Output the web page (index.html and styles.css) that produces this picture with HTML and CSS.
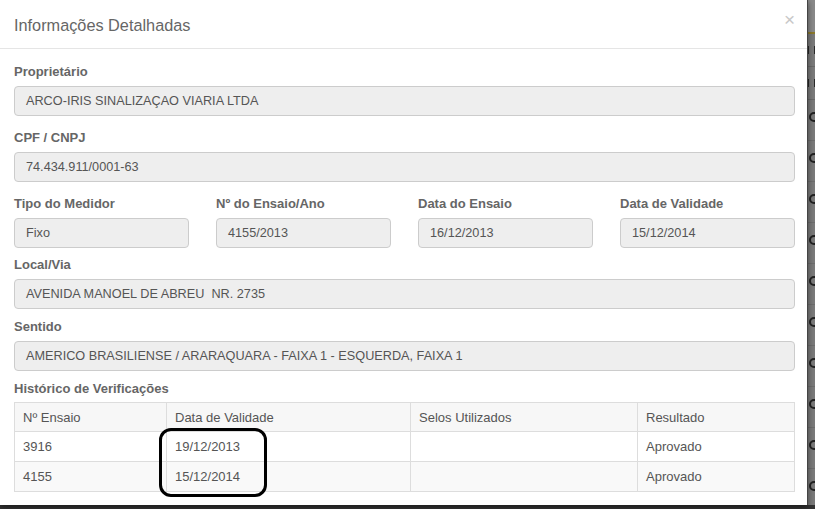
FILE: index.html
```html
<!DOCTYPE html>
<html lang="pt-BR">
<head>
    <meta charset="UTF-8">
    <title>Informações Detalhadas</title>
    <link rel="stylesheet" href="styles.css">
</head>
<body>
    <div class="screen">
        <div class="modal">
            <div class="modal-header">
                <h4 class="modal-title">Informações Detalhadas</h4>
                <span class="close">&times;</span>
            </div>
            <div class="modal-body">
                <div class="form-group">
                    <label>Proprietário</label>
                    <div class="field">ARCO-IRIS SINALIZAÇAO VIARIA LTDA</div>
                </div>
                <div class="form-group">
                    <label>CPF / CNPJ</label>
                    <div class="field">74.434.911/0001-63</div>
                </div>
                <div class="form-row">
                    <div>
                        <label>Tipo do Medidor</label>
                        <div class="field">Fixo</div>
                    </div>
                    <div>
                        <label>Nº do Ensaio/Ano</label>
                        <div class="field">4155/2013</div>
                    </div>
                    <div>
                        <label>Data do Ensaio</label>
                        <div class="field">16/12/2013</div>
                    </div>
                    <div>
                        <label>Data de Validade</label>
                        <div class="field">15/12/2014</div>
                    </div>
                </div>
                <div class="form-group tight">
                    <label>Local/Via</label>
                    <div class="field">AVENIDA MANOEL DE ABREU&nbsp; NR. 2735</div>
                </div>
                <div class="form-group tight">
                    <label>Sentido</label>
                    <div class="field">AMERICO BRASILIENSE / ARARAQUARA - FAIXA 1 - ESQUERDA, FAIXA 1</div>
                </div>
                <label>Histórico de Verificações</label>
                <div class="table-wrap">
                    <table class="history">
                        <thead>
                            <tr>
                                <th class="c1">Nº Ensaio</th>
                                <th class="c2">Data de Validade</th>
                                <th class="c3">Selos Utilizados</th>
                                <th class="c4">Resultado</th>
                            </tr>
                        </thead>
                        <tbody>
                            <tr>
                                <td>3916</td>
                                <td>19/12/2013</td>
                                <td></td>
                                <td>Aprovado</td>
                            </tr>
                            <tr>
                                <td>4155</td>
                                <td>15/12/2014</td>
                                <td></td>
                                <td>Aprovado</td>
                            </tr>
                        </tbody>
                    </table>
                    <div class="mark"></div>
                </div>
            </div>
        </div>
        <div class="behind">
            <div class="behind-top"></div>
            <div class="behind-row"><span class="stub"></span></div>
            <div class="behind-row"><span class="stub"></span></div>
            <div class="lens"></div>
            <div class="lens"></div>
            <div class="lens"></div>
            <div class="lens"></div>
            <div class="lens"></div>
            <div class="lens"></div>
            <div class="lens"></div>
            <div class="lens"></div>
            <div class="lens"></div>
            <div class="lens"></div>
        </div>
    </div>
    <div class="bottom-strip"></div>
</body>
</html>
```
FILE: styles.css
```css
html, body {
    margin: 0;
    padding: 0;
    height: 509px;
    overflow: hidden;
}
body {
    font-family: "Liberation Sans", Arial, sans-serif;
    font-size: 13px;
    color: #555;
    background: #3c3c3c;
}
.screen {
    display: flex;
    height: 505px;
}
.modal {
    width: 807px;
    background: #fff;
    border-right: 1px solid #444;
    box-shadow: 0 2px 6px rgba(0, 0, 0, 0.5);
    position: relative;
    z-index: 1;
}
.modal-header {
    height: 48px;
    border-bottom: 1px solid #e5e5e5;
    display: flex;
    align-items: center;
    justify-content: space-between;
    padding: 0 14px;
}
.modal-title {
    margin: 3px 0 0;
    font-size: 16.3px;
    font-weight: normal;
    color: #666;
}
.close {
    font-size: 19px;
    color: #c8c8c8;
    margin-right: -2px;
    margin-top: -8px;
}
.modal-body {
    padding: 13px 12px 0 14px;
}
label {
    display: block;
    font-weight: bold;
    color: #666;
    line-height: 19px;
    margin-bottom: 5px;
}
.field {
    height: 28px;
    line-height: 28px;
    padding: 0 11px;
    background: #eee;
    border: 1px solid #ccc;
    border-radius: 4px;
    color: #555;
    font-size: 12.7px;
    white-space: nowrap;
}
.form-group {
    margin-bottom: 12px;
}
.form-group.tight {
    margin-bottom: 8px;
}
.form-row {
    display: grid;
    grid-template-columns: repeat(4, 175px);
    column-gap: 27px;
    margin-bottom: 7px;
}
.table-wrap {
    position: relative;
    margin-top: -1px;
}
.history {
    width: 781px;
    border-collapse: collapse;
    border: 1px solid #ddd;
}
.history th,
.history td {
    height: 29px;
    padding: 0 8px;
    text-align: left;
    font-weight: normal;
    color: #555;
    border-left: 1px solid #ddd;
    border-top: 1px solid #ddd;
}
.history th {
    background: #f7f7f7;
    height: 28px;
}
.history tbody tr:nth-child(2) td {
    background: #f9f9f9;
}
.c1 { width: 135px; }
.c2 { width: 227px; }
.c3 { width: 210px; }
.mark {
    position: absolute;
    left: 145px;
    top: 26px;
    width: 102px;
    height: 63px;
    border: 3px solid #000;
    border-radius: 12px;
}
.behind {
    flex: 1;
    background: #7b7b7b;
}
.behind-top {
    height: 32px;
    background: #8a8a8a;
    border-bottom: 2px solid #8c7a2c;
}
.behind-row {
    height: 32px;
    border-bottom: 1px solid #6a6a6a;
    display: flex;
    align-items: center;
}
.stub {
    width: 5px;
    height: 8px;
    border-left: 1px solid #2a2a2a;
    border-right: 1px solid #2a2a2a;
}
.lens {
    height: 40px;
    border-bottom: 1px solid #6e6e6e;
    position: relative;
}
.lens::before {
    content: "";
    position: absolute;
    left: 1px;
    top: 12px;
    width: 6px;
    height: 6px;
    border: 2px solid #222;
    border-radius: 50%;
}
.bottom-strip {
    height: 4px;
    background: #333;
}
```
